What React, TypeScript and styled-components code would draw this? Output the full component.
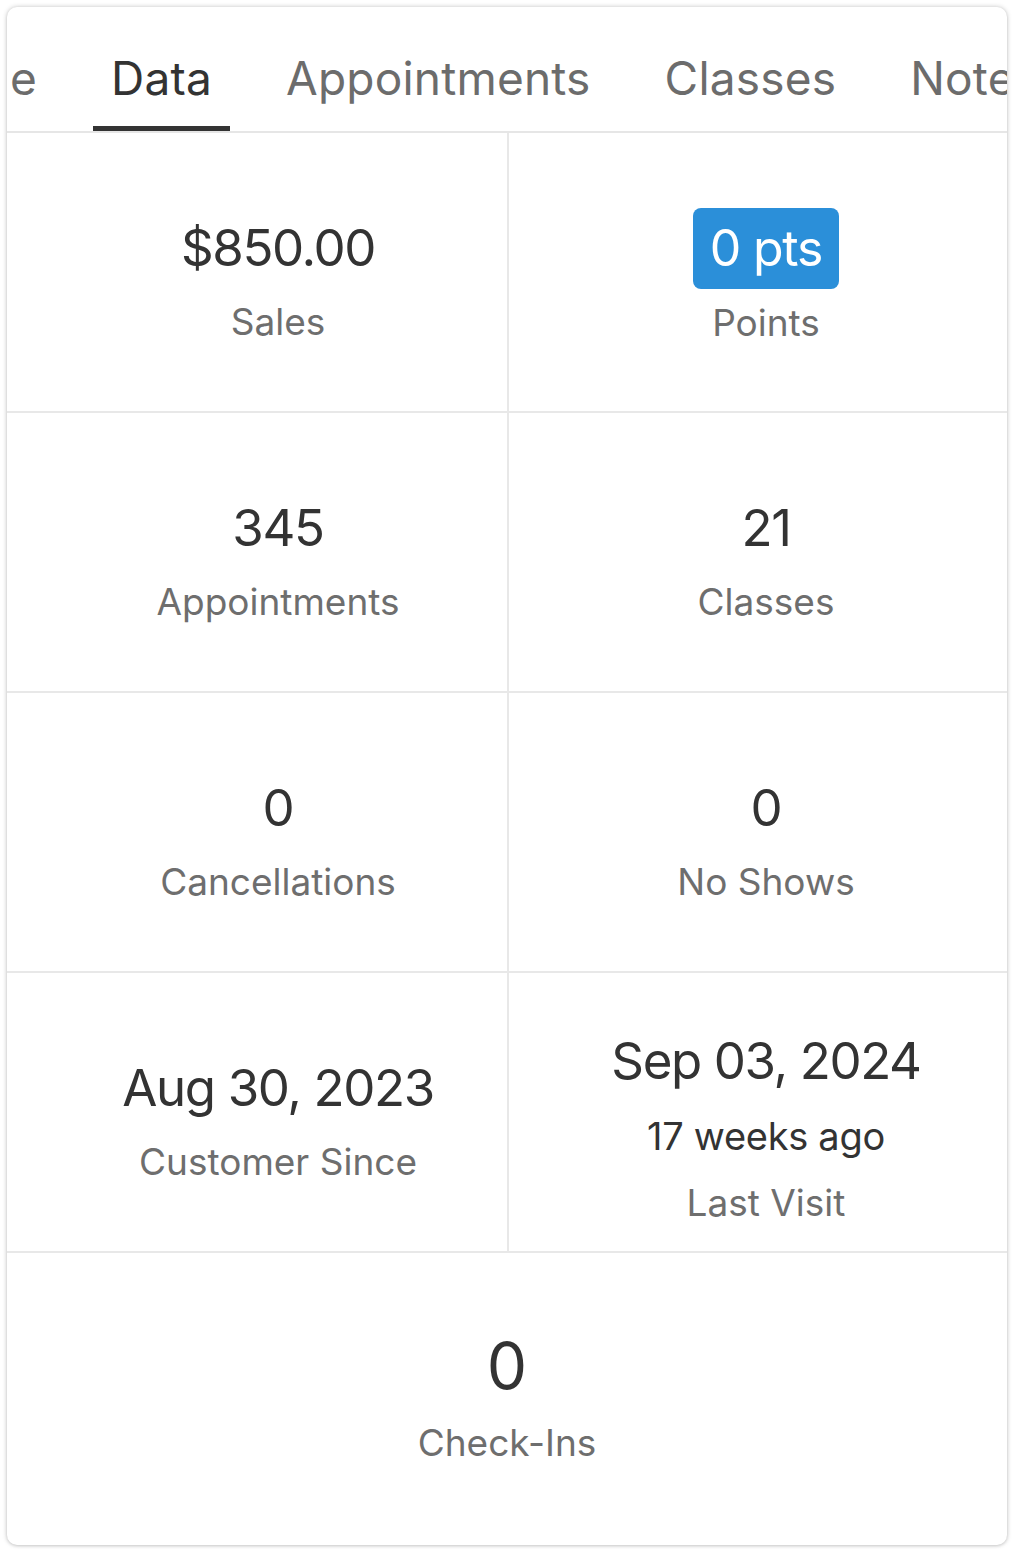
import React, { useLayoutEffect, useRef } from "react";
import styled, { createGlobalStyle } from "styled-components";

const Global = createGlobalStyle`
  html, body {
    margin: 0;
    padding: 0;
    background: #ffffff;
  }
  body {
    font-family: Inter, "Noto Sans", "Liberation Sans", sans-serif;
    -webkit-font-smoothing: antialiased;
  }
`;

const Page = styled.div`
  padding: 7px 8px 7px 7px;
`;

const Card = styled.div`
  width: 1000px;
  height: 1538px;
  background: #ffffff;
  border-radius: 10px;
  box-shadow: 0 0 5px rgba(0, 0, 0, 0.22), 0 1px 3px rgba(0, 0, 0, 0.1);
  overflow: hidden;
  display: flex;
  flex-direction: column;
`;

const TabBar = styled.div`
  position: relative;
  height: 124px;
  flex: 0 0 auto;
  border-bottom: 2px solid #e6e6e6;
  overflow: hidden;
`;

const TabStrip = styled.div`
  display: flex;
  height: 100%;
  width: max-content;
`;

const Tab = styled.div<{ $active?: boolean }>`
  position: relative;
  display: flex;
  align-items: center;
  padding: 18px 18px 0;
  margin: 0 19px;
  font-size: 46px;
  letter-spacing: 0.2px;
  color: ${(p) => (p.$active ? "#333333" : "#6c6c6c")};
  white-space: nowrap;

  &::after {
    content: "";
    display: ${(p) => (p.$active ? "block" : "none")};
    position: absolute;
    left: 0;
    right: 0;
    bottom: 0;
    height: 5px;
    background: #333333;
  }
`;

const Grid = styled.div`
  flex: 1 1 auto;
  display: grid;
  grid-template-columns: 502px 1fr;
  grid-template-rows: 280px 280px 280px 280px 1fr;
`;

const Cell = styled.div<{ $shift: number; $wide?: boolean; $last?: boolean; $tall?: boolean }>`
  grid-column: ${(p) => (p.$wide ? "1 / span 2" : "auto")};
  display: flex;
  flex-direction: column;
  align-items: center;
  justify-content: center;
  gap: ${(p) => (p.$wide ? 16 : 22)}px;
  padding-top: ${(p) => (p.$wide ? 0 : p.$tall ? 32 : 18)}px;
  padding-bottom: ${(p) => (p.$wide ? 4 : 0)}px;
  padding-left: ${(p) => p.$shift}px;
  border-bottom: ${(p) => (p.$wide ? "none" : "2px solid #e8e8e8")};
  border-right: ${(p) => (p.$last || p.$wide ? "none" : "2px solid #e8e8e8")};
  text-align: center;
`;

const Value = styled.div<{ $big?: boolean }>`
  font-size: ${(p) => (p.$big ? 64 : 51)}px;
  letter-spacing: ${(p) => (p.$big ? 0 : -1.4)}px;
  line-height: 1.2;
  color: #333333;
  white-space: nowrap;
`;

const Sub = styled.div`
  font-size: 38px;
  letter-spacing: -0.3px;
  line-height: 1.2;
  color: #333333;
  white-space: nowrap;
`;

const Label = styled.div`
  font-size: 37px;
  line-height: 1.2;
  color: #6e6e6e;
  white-space: nowrap;
`;

const Badge = styled.div`
  display: inline-flex;
  align-items: center;
  justify-content: center;
  height: 81px;
  margin: -9px 0 -10px;
  padding: 0 17px;
  border-radius: 8px;
  background: #2b8fd9;
  color: #ffffff;
  font-size: 50px;
  letter-spacing: -1.2px;
  line-height: 1;
  white-space: nowrap;
`;

const tabs = ["Profile", "Data", "Appointments", "Classes", "Notes", "Forms"];

type Stat = {
  value?: string;
  badge?: string;
  sub?: string;
  label: string;
};

const stats: Stat[] = [
  { value: "$850.00", label: "Sales" },
  { badge: "0 pts", label: "Points" },
  { value: "345", label: "Appointments" },
  { value: "21", label: "Classes" },
  { value: "0", label: "Cancellations" },
  { value: "0", label: "No Shows" },
  { value: "Aug 30, 2023", label: "Customer Since" },
  { value: "Sep 03, 2024", sub: "17 weeks ago", label: "Last Visit" },
];

export default function App() {
  const barRef = useRef<HTMLDivElement>(null);
  const activeRef = useRef<HTMLDivElement>(null);

  useLayoutEffect(() => {
    const bar = barRef.current;
    const active = activeRef.current;
    if (bar && active) {
      bar.scrollLeft = active.offsetLeft - 86;
    }
  }, []);

  return (
    <>
      <Global />
      <Page>
        <Card>
          <TabBar ref={barRef}>
            <TabStrip>
              {tabs.map((t) => (
                <Tab
                  key={t}
                  $active={t === "Data"}
                  ref={t === "Data" ? activeRef : undefined}
                >
                  {t}
                </Tab>
              ))}
            </TabStrip>
          </TabBar>
          <Grid>
            {stats.map((s, i) => {
              const right = i % 2 === 1;
              return (
                <Cell
                  key={s.label}
                  $shift={right ? 16 : 42}
                  $last={right}
                  $tall={!!s.sub}
                >
                  {s.badge ? <Badge>{s.badge}</Badge> : <Value>{s.value}</Value>}
                  {s.sub && <Sub>{s.sub}</Sub>}
                  <Label>{s.label}</Label>
                </Cell>
              );
            })}
            <Cell $shift={0} $wide>
              <Value $big>0</Value>
              <Label>Check-Ins</Label>
            </Cell>
          </Grid>
        </Card>
      </Page>
    </>
  );
}
